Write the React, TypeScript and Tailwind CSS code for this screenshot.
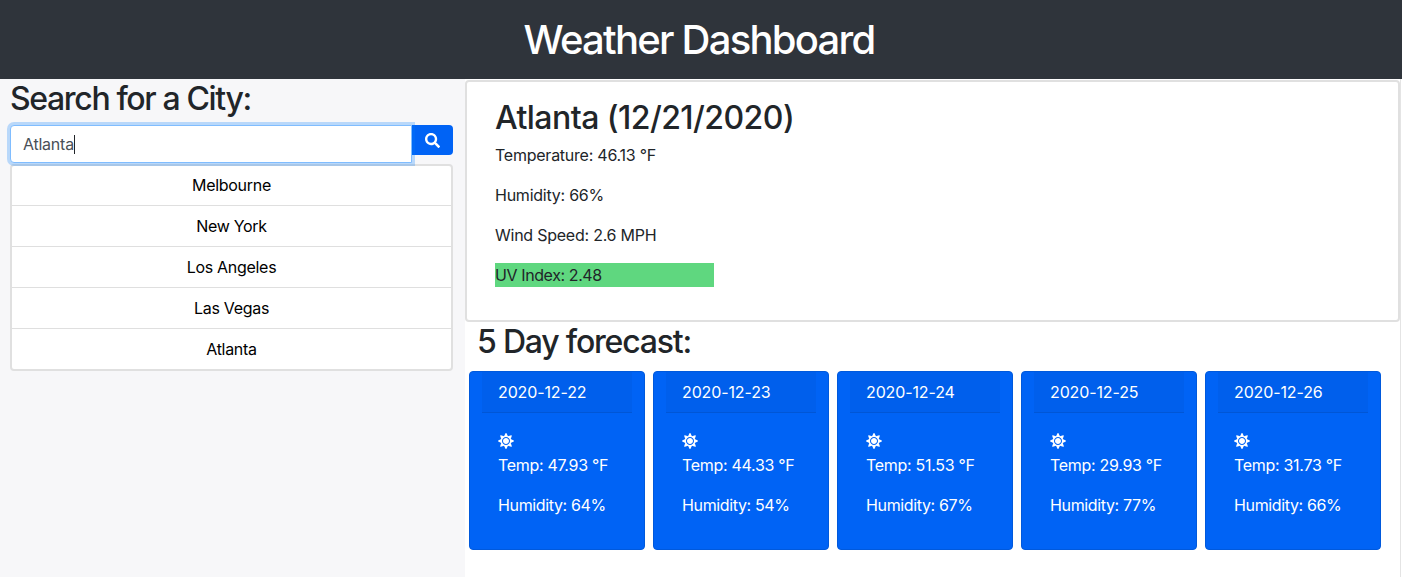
import { FaSun, FaSearch } from "react-icons/fa"

const cities = ["Melbourne", "New York", "Los Angeles", "Las Vegas", "Atlanta"]

const forecast = [
  { date: "2020-12-22", temp: "47.93", humidity: "64" },
  { date: "2020-12-23", temp: "44.33", humidity: "54" },
  { date: "2020-12-24", temp: "51.53", humidity: "67" },
  { date: "2020-12-25", temp: "29.93", humidity: "77" },
  { date: "2020-12-26", temp: "31.73", humidity: "66" },
]

function ForecastCard({ date, temp, humidity }: { date: string; temp: string; humidity: string }) {
  return (
    <div className="w-44 h-[179px] shrink-0 rounded bg-[#0063f5] border border-[#0059dc] text-white px-3">
      <div className="h-[41px] pl-4 pt-2 bg-[#005fec] border-b border-[#0056d6] text-base leading-6 tracking-[-0.12px]">{date}</div>
      <div className="pl-4 pt-5">
        <FaSun className="text-base" />
        <p className="mt-1 text-base leading-6 tracking-[-0.3px]">Temp: {temp} °F</p>
        <p className="mt-4 text-base leading-6 tracking-[-0.36px]">Humidity: {humidity}%</p>
      </div>
    </div>
  )
}

export default function App() {
  return (
    <div className="w-[1402px] h-[577px] overflow-hidden bg-white text-[#212529] tracking-[-0.24px] font-['Inter','Liberation_Sans',sans-serif]">
      <header className="h-[79px] pr-1 bg-[#2f343b] text-white flex items-center justify-center">
        <h1 className="text-[40px] leading-[48px] font-medium tracking-[-1.75px]">Weather Dashboard</h1>
      </header>

      <div className="flex h-[498px]">
        <aside className="w-[465px] shrink-0 bg-[#f7f7f9] pl-[10px] pr-3">
          <h2 className="pt-px text-[32px] leading-[38px] font-medium tracking-[-1.36px]">Search for a City:</h2>
          <div className="flex items-start mt-[7px]">
            <div className="flex items-center w-[402px] h-[38px] pl-3 bg-white rounded-l border border-[#80bdff] shadow-[0_0_0_3px_rgba(0,123,255,0.25)] relative text-base text-[#495057]">
              Atlanta<span className="w-px h-[19px] bg-[#212529]" />
            </div>
            <button className="w-[41px] h-[30px] flex items-center justify-center rounded-r bg-[#0063f5] text-white">
              <FaSearch className="text-[15px]" />
            </button>
          </div>
          <ul className="mt-px w-[443px] h-[207px] rounded bg-white border-2 border-[#e0e0e0] text-black tracking-[-0.3px]">
            {cities.map((city, i) => (
              <li
                key={city}
                className={`flex items-center justify-center text-base ${i > 0 ? "h-[41px] border-t border-[#dfdfdf]" : "h-[39px] pb-px"}`}
              >
                {city}
              </li>
            ))}
          </ul>
        </aside>

        <main className="w-[936px] shrink-0 border-r border-[#e4e4e4]">
          <section className="h-[242px] mt-px rounded border-2 border-[#e0e0e0] pl-[28px] pt-[17px] bg-white">
            <h2 className="text-[32px] leading-[38px] font-medium tracking-[-0.55px]">Atlanta (12/21/2020)</h2>
            <p className="mt-[6px] text-base leading-6">Temperature: 46.13 °F</p>
            <p className="mt-4 text-base leading-6">Humidity: 66%</p>
            <p className="mt-4 text-base leading-6">Wind Speed: 2.6 MPH</p>
            <p className="mt-4 w-[219px] text-base leading-6 tracking-[-0.4px] bg-[#5fd77f]">UV Index: 2.48</p>
          </section>
          <h2 className="mt-px ml-3 text-[32px] leading-[38px] font-medium tracking-[-1.2px]">5 Day forecast:</h2>
          <div className="flex gap-2 mt-[10px] ml-1">
            {forecast.map((day) => (
              <ForecastCard key={day.date} {...day} />
            ))}
          </div>
        </main>
      </div>
    </div>
  )
}
